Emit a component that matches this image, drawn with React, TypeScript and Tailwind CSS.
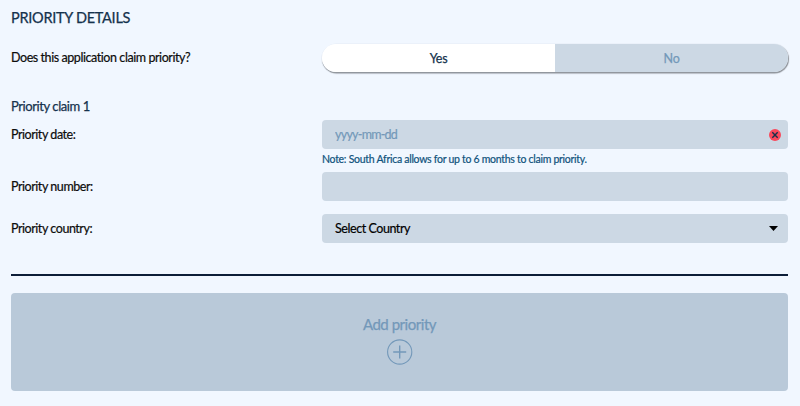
import { useState } from "react";
import type { ReactNode } from "react";

function FieldRow({ label, children }: { label: string; children: ReactNode }) {
  return (
    <div className="flex">
      <label className="w-[311px] shrink-0 pt-[5px] text-[12.5px] leading-5 tracking-[-0.45px] text-[#0c0c0c]">
        {label}
      </label>
      <div className="flex-1">{children}</div>
    </div>
  );
}

function ClearIcon() {
  return (
    <svg width="12" height="12" viewBox="0 0 12 12">
      <circle cx="6" cy="6" r="6" fill="#f9485b" />
      <path d="M3.3 3.3l5.4 5.4M8.7 3.3l-5.4 5.4" stroke="#16304a" strokeWidth="1.4" />
    </svg>
  );
}

function PlusIcon() {
  return (
    <svg width="26" height="26" viewBox="0 0 26 26" fill="none" stroke="#7398b9" strokeWidth="1.1">
      <circle cx="12.7" cy="13" r="12.1" />
      <path d="M12.7 6.5v13M6.2 13h13" strokeWidth="1.4" />
    </svg>
  );
}

export default function App() {
  const [claimsPriority, setClaimsPriority] = useState(true);

  return (
    <div className="h-[406px] bg-[#f1f7ff] pr-3 pl-[11px] pt-2 font-['Lato',sans-serif]">
      <h2 className="text-[14.5px] leading-5 tracking-[-0.27px] text-[#15324d] [-webkit-text-stroke:0.25px]">
        PRIORITY DETAILS
      </h2>

      <div className="mt-4 flex h-[28px] items-center">
        <span className="w-[311px] shrink-0 pt-px text-[12.5px] tracking-[-0.43px] text-[#0c0c0c] [-webkit-text-stroke:0.2px]">
          Does this application claim priority?
        </span>
        <div className="flex h-[28px] flex-1 overflow-hidden rounded-full text-[12.5px] tracking-[-0.3px] shadow-[0.5px_1px_1px_0.5px_#8d9299]">
          <button
            className={`w-1/2 pt-0.5 [-webkit-text-stroke:0.25px] ${claimsPriority ? "bg-white text-[#15324d]" : "bg-[#ccd8e4] text-[#7398b9]"}`}
            onClick={() => setClaimsPriority(true)}
          >
            Yes
          </button>
          <button
            className={`w-1/2 pt-0.5 [-webkit-text-stroke:0.25px] ${claimsPriority ? "bg-[#ccd8e4] text-[#7398b9]" : "bg-white text-[#15324d]"}`}
            onClick={() => setClaimsPriority(false)}
          >
            No
          </button>
        </div>
      </div>

      <h3 className="mt-6 text-[13px] leading-5 tracking-[-0.42px] text-[#15324d] [-webkit-text-stroke:0.25px]">
        Priority claim 1
      </h3>

      <div className="mt-1 [-webkit-text-stroke:0.2px]">
        <FieldRow label="Priority date:">
          <div className="flex h-[29px] items-center justify-between rounded bg-[#ccd8e4] pr-[7px] pl-[13px]">
            <input
              className="w-40 bg-transparent pt-0.5 text-[12.5px] tracking-[-0.75px] outline-none placeholder:text-[#7398b9]"
              placeholder="yyyy-mm-dd"
            />
            <ClearIcon />
          </div>
          <p className="h-[23px] pt-[3px] text-[10.5px] leading-[15px] tracking-[-0.28px] whitespace-nowrap text-[#0f527c]">
            Note: South Africa allows for up to 6 months to claim priority.
          </p>
        </FieldRow>
        <FieldRow label="Priority number:">
          <input className="block h-[29px] w-full rounded bg-[#ccd8e4] px-3 text-[12.5px] outline-none" />
        </FieldRow>
        <div className="mt-[13px]">
          <FieldRow label="Priority country:">
            <button className="flex h-[29px] w-full items-center justify-between rounded bg-[#ccd8e4] pr-[10px] pl-[13px] text-[12.5px] tracking-[-0.44px] text-black">
              <span className="pt-0.5">Select Country</span>
              <svg width="9" height="5" viewBox="0 0 9 5">
                <path d="M0 0h9L4.5 5z" />
              </svg>
            </button>
          </FieldRow>
        </div>
      </div>

      <hr className="mt-[30.5px] border-t-2 border-[#0d1e38]" />

      <button className="mt-[17px] flex h-[98px] w-full flex-col items-center rounded bg-[#b9c9d9] pt-[21.5px] text-[#7398b9]">
        <span className="text-[15px] leading-5 tracking-[-0.47px] [-webkit-text-stroke:0.25px]">
          Add priority
        </span>
        <span className="mt-[4.5px]">
          <PlusIcon />
        </span>
      </button>
    </div>
  );
}
